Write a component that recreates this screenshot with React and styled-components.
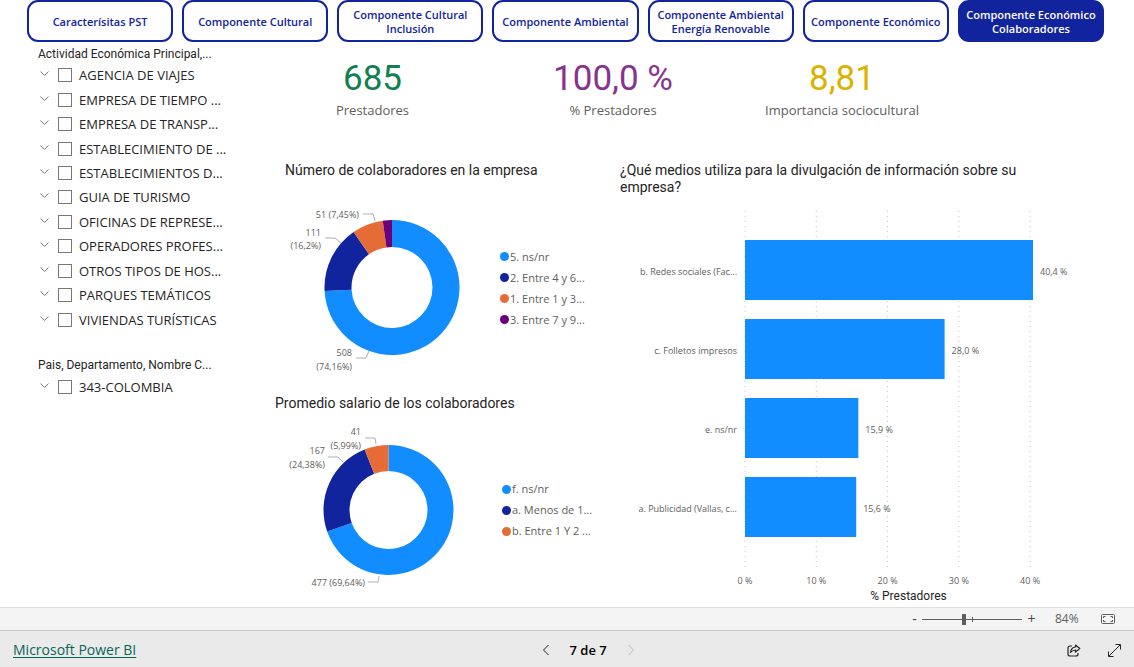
import React from "react";
import styled, { createGlobalStyle, css } from "styled-components";

const COLORS = {
  azure: "#118DFF",
  navy: "#12239E",
  orange: "#E66C37",
  purple: "#6B007B",
  text: "#252423",
  muted: "#605E5C",
};

const UI = '"Open Sans", "Noto Sans", sans-serif';
const DIN = 'Roboto, "Open Sans", sans-serif';

const GlobalStyle = createGlobalStyle`
  *, *::before, *::after { box-sizing: border-box; }
  body { margin: 0; background: #fff; color: ${COLORS.text}; font-family: ${UI}; }
  button, input { font: inherit; }
  ul, h2, p, dl, dd, dt { margin: 0; padding: 0; }
  ul { list-style: none; }
`;

const Page = styled.div`
  display: flex;
  flex-direction: column;
  min-height: 100vh;
`;

const Report = styled.main`
  flex: 1;
  padding: 0 30px 0 27px;
`;

const Tabs = styled.nav`
  display: grid;
  grid-template-columns: repeat(7, 1fr);
  gap: 9px;
`;

const Tab = styled.button`
  height: 42px;
  padding: 2px 2px 0;
  border: 2px solid ${COLORS.navy};
  border-radius: 11px;
  background: ${(p) => (p.$active ? COLORS.navy : "#fff")};
  color: ${(p) => (p.$active ? "#fff" : COLORS.navy)};
  font-size: 11px;
  font-weight: 600;
  line-height: 14px;
  cursor: pointer;
`;

const Body = styled.div`
  display: grid;
  grid-template-columns: 233px 1fr;
`;

const Sidebar = styled.aside`
  padding: 4px 0 0 11px;
`;

const Slicer = styled.section`
  margin-bottom: 25px;
`;

const SlicerTitle = styled.h2`
  font-family: ${DIN};
  font-size: 12px;
  font-weight: 400;
  line-height: 17px;
`;

const SlicerList = styled.ul`
  display: grid;
  grid-auto-rows: 1fr;
  height: ${(p) => p.$height}px;
`;

const SlicerRow = styled.li`
  display: flex;
  align-items: center;
`;

const Expander = styled.button`
  display: flex;
  width: 20px;
  height: 16px;
  padding: 3px 2px;
  border: 0;
  background: none;
`;

const Option = styled.label`
  display: flex;
  align-items: center;
  gap: 7px;
  font-size: 13px;
  line-height: 20px;
  white-space: nowrap;
`;

const Check = styled.input`
  appearance: none;
  width: 14px;
  height: 14px;
  margin: 0;
  border: 1px solid #7a7876;
  background: #fff;
  &:checked { background: ${COLORS.text}; }
`;

const Kpis = styled.dl`
  display: grid;
  grid-template-columns: 225fr 256fr 202fr 161fr;
  padding-top: 16px;
  height: 120px;
`;

const Kpi = styled.div`
  display: flex;
  flex-direction: column-reverse;
  justify-content: flex-end;
  text-align: center;
`;

const KpiValue = styled.dd`
  color: ${(p) => p.$color};
  font-family: ${DIN};
  font-size: 35px;
  line-height: 42px;
`;

const KpiLabel = styled.dt`
  color: ${COLORS.muted};
  font-size: 13px;
  line-height: 20px;
`;

const Charts = styled.div`
  display: grid;
  grid-template-columns: 360px 1fr;
`;

const ChartTitle = styled.h2`
  padding-left: ${(p) => p.$indent || 0}px;
  font-family: ${DIN};
  font-size: 14px;
  font-weight: 400;
  line-height: 17px;
`;

const DonutCard = styled.section`
  height: ${(p) => p.$height}px;
  padding-left: 15px;
`;

const DonutBody = styled.div`
  display: flex;
  align-items: center;
`;

const Drawing = styled.svg`
  display: block;
  flex: none;
  overflow: visible;
`;

const labelText = css`
  fill: ${COLORS.muted};
  font-family: ${UI};
  font-size: 9px;
`;

const DataLabel = styled.text`
  ${labelText}
  text-anchor: ${(p) => p.$anchor || "end"};
`;

const AxisTitle = styled.p`
  padding: 0 32px 0 125px;
  font-family: ${DIN};
  font-size: 12px;
  line-height: 14px;
  text-align: center;
`;

const Leader = styled.polyline`
  fill: none;
  stroke: #b3b0ad;
  stroke-width: 1;
`;

const Legend = styled.ul`
  display: flex;
  flex-direction: column;
  gap: 5px;
`;

const LegendItem = styled.li`
  display: flex;
  align-items: center;
  gap: 1px;
  color: ${COLORS.muted};
  font-size: 11px;
  line-height: 16px;
  white-space: nowrap;
  &::before {
    content: "";
    width: 9px;
    height: 9px;
    border-radius: 50%;
    background: ${(p) => p.$color};
  }
`;

const BarCard = styled.section`
  min-width: 0;
  ${ChartTitle} { padding-right: 64px; }
`;

const Plot = styled.div`
  padding: 14px 71px 0 125px;
`;

const StatusBar = styled.div`
  display: flex;
  align-items: center;
  justify-content: flex-end;
  height: 23px;
  padding-right: 18px;
  border-top: 1px solid #e0e0e0;
  background: #f4f4f4;
  color: ${COLORS.muted};
`;

const ZoomButton = styled.button`
  display: flex;
  align-items: center;
  justify-content: center;
  width: 15px;
  height: 20px;
  padding: 0;
  border: 0;
  background: none;
  color: #484644;
  font-size: 14px;
  line-height: 20px;
`;

const ZoomRange = styled.input`
  appearance: none;
  width: 100px;
  height: 11px;
  margin: 0 2px 0 0;
  background:
    linear-gradient(${COLORS.muted}, ${COLORS.muted}) center / 100% 1px no-repeat,
    linear-gradient(${COLORS.muted}, ${COLORS.muted}) center / 1px 5px no-repeat;
  &::-webkit-slider-thumb {
    appearance: none;
    width: 4px;
    height: 11px;
    background: ${COLORS.muted};
  }
`;

const ZoomValue = styled.output`
  width: 62px;
  padding-left: 16px;
  font-size: 12px;
  line-height: 20px;
`;

const Footer = styled.footer`
  display: flex;
  align-items: center;
  justify-content: space-between;
  height: 37px;
  padding: 2px 0 0 13px;
  border-top: 1px solid #c8c8c8;
  background: #eaeaea;
`;

const BrandLink = styled.a`
  color: #0b6556;
  font-size: 14px;
  line-height: 20px;
  text-underline-offset: 2px;
`;

const Pager = styled.div`
  display: flex;
  align-items: center;
  gap: 12px;
  margin-right: 14px;
  color: #000;
  font-size: 13px;
  font-weight: 600;
  line-height: 20px;
`;

const IconButton = styled.button`
  display: flex;
  align-items: center;
  justify-content: center;
  width: ${(p) => p.$width}px;
  height: 24px;
  padding: 0;
  border: 0;
  background: none;
  color: ${(p) => p.$color || "#252423"};
`;

const Actions = styled.div`
  display: flex;
`;

const tabs = [
  "Caracterísitas PST",
  "Componente Cultural",
  "Componente Cultural Inclusión",
  "Componente Ambiental",
  "Componente Ambiental Energía Renovable",
  "Componente Económico",
  "Componente Económico Colaboradores",
];

const activities = [
  "AGENCIA DE VIAJES",
  "EMPRESA DE TIEMPO ...",
  "EMPRESA DE TRANSP...",
  "ESTABLECIMIENTO DE ...",
  "ESTABLECIMIENTOS D...",
  "GUIA DE TURISMO",
  "OFICINAS DE REPRESE...",
  "OPERADORES PROFES...",
  "OTROS TIPOS DE HOS...",
  "PARQUES TEMÁTICOS",
  "VIVIENDAS TURÍSTICAS",
];

const kpis = [
  { value: "685", label: "Prestadores", color: "#118050" },
  { value: "100,0 %", label: "% Prestadores", color: "#87338F" },
  { value: "8,81", label: "Importancia sociocultural", color: "#D9B300" },
];

const employees = {
  cx: 117,
  cy: 108.5,
  outer: 67.5,
  inner: 40.5,
  slices: [
    { value: 508, color: COLORS.azure, label: "5. ns/nr" },
    { value: 111, color: COLORS.navy, label: "2. Entre 4 y 6..." },
    { value: 51, color: COLORS.orange, label: "1. Entre 1 y 3..." },
    { value: 15, color: COLORS.purple, label: "3. Entre 7 y 9..." },
  ],
  labels: [
    { x: 84, y: 39, text: "51 (7,45%)" },
    { x: 46, y: 57, text: "111" },
    { x: 46, y: 70, text: "(16,2%)" },
    { x: 77, y: 177, text: "508" },
    { x: 77, y: 191, text: "(74,16%)" },
  ],
  leaders: ["88,35 98,35 100,42", "50,59 60,59 66,64", "81,179 91,179 94,172"],
};

const salary = {
  cx: 113.5,
  cy: 98,
  outer: 65,
  inner: 39,
  slices: [
    { value: 477, color: COLORS.azure, label: "f. ns/nr" },
    { value: 167, color: COLORS.navy, label: "a. Menos de 1..." },
    { value: 41, color: COLORS.orange, label: "b. Entre 1 Y 2 ..." },
  ],
  labels: [
    { x: 86, y: 23, text: "41" },
    { x: 86, y: 37, text: "(5,99%)" },
    { x: 50, y: 42, text: "167" },
    { x: 50, y: 56, text: "(24,38%)" },
    { x: 90, y: 174, text: "477 (69,64%)" },
  ],
  leaders: ["90,26 100,26 101,32", "53,45 63,45 68,50", "93,170 103,170 104,164"],
};

const media = [
  { label: "b. Redes sociales (Fac...", value: 40.4, text: "40,4 %" },
  { label: "c. Folletos impresos", value: 28.0, text: "28,0 %" },
  { label: "e. ns/nr", value: 15.9, text: "15,9 %" },
  { label: "a. Publicidad (Vallas, c...", value: 15.6, text: "15,6 %" },
];

function slicePath(cx, cy, outer, inner, from, to) {
  const point = (r, t) => {
    const a = t * 2 * Math.PI;
    return `${cx + r * Math.sin(a)} ${cy - r * Math.cos(a)}`;
  };
  const large = to - from > 0.5 ? 1 : 0;
  return `M${point(outer, from)}A${outer} ${outer} 0 ${large} 1 ${point(outer, to)}L${point(inner, to)}A${inner} ${inner} 0 ${large} 0 ${point(inner, from)}Z`;
}

function Donut({ data, width, height, title }) {
  const total = data.slices.reduce((sum, s) => sum + s.value, 0);
  let start = 0;
  return (
    <DonutBody>
      <Drawing width={width} height={height} role="img" aria-label={title}>
        {data.slices.map((s) => {
          const end = start + s.value / total;
          const d = slicePath(data.cx, data.cy, data.outer, data.inner, start, end);
          start = end;
          return <path key={s.label} d={d} fill={s.color} />;
        })}
        {data.leaders.map((points) => (
          <Leader key={points} points={points} />
        ))}
        {data.labels.map((l) => (
          <DataLabel key={l.text} x={l.x} y={l.y}>{l.text}</DataLabel>
        ))}
      </Drawing>
      <Legend>
        {data.slices.map((s) => (
          <LegendItem key={s.label} $color={s.color}>{s.label}</LegendItem>
        ))}
      </Legend>
    </DonutBody>
  );
}

function BarChart() {
  const percent = (v) => `${(v / 40.4) * 100}%`;
  return (
    <Plot>
      <Drawing width="100%" height="379" role="img" aria-label="% Prestadores por medio">
        {[0, 10, 20, 30, 40].map((t) => (
          <g key={t}>
            <line x1={percent(t)} x2={percent(t)} y1="1" y2="361" stroke="#c8c6c4" strokeDasharray="1 4" />
            <DataLabel $anchor="middle" x={percent(t)} y="374">{t} %</DataLabel>
          </g>
        ))}
        {media.map((m, i) => (
          <g key={m.label}>
            <rect y={30 + i * 79} width={percent(m.value)} height="60" fill={COLORS.azure} />
            <DataLabel x="0" dx="-8" y={65 + i * 79}>{m.label}</DataLabel>
            <DataLabel $anchor="start" x={percent(m.value)} dx="7" y={65 + i * 79}>{m.text}</DataLabel>
          </g>
        ))}
      </Drawing>
    </Plot>
  );
}

function SlicerOption({ name }) {
  return (
    <SlicerRow>
      <Expander aria-label={`Expandir ${name}`}>
        <svg width="10" height="8" viewBox="0 0 10 8" fill="none" stroke="#7a7876">
          <path d="M0.5 1.5 4.5 5.5 8.5 1.5" />
        </svg>
      </Expander>
      <Option>
        <Check type="checkbox" />
        {name}
      </Option>
    </SlicerRow>
  );
}

export default function App() {
  return (
    <Page>
      <GlobalStyle />
      <Report>
        <Tabs>
          {tabs.map((t, i) => (
            <Tab key={t} $active={i === 6}>{t}</Tab>
          ))}
        </Tabs>
        <Body>
          <Sidebar>
            <Slicer>
              <SlicerTitle>Actividad Económica Principal,...</SlicerTitle>
              <SlicerList $height={269}>
                {activities.map((a) => <SlicerOption key={a} name={a} />)}
              </SlicerList>
            </Slicer>
            <Slicer>
              <SlicerTitle>Pais, Departamento, Nombre C...</SlicerTitle>
              <SlicerList $height={25}>
                <SlicerOption name="343-COLOMBIA" />
              </SlicerList>
            </Slicer>
          </Sidebar>
          <div>
            <Kpis>
              {kpis.map((k) => (
                <Kpi key={k.label}>
                  <KpiLabel>{k.label}</KpiLabel>
                  <KpiValue $color={k.color}>{k.value}</KpiValue>
                </Kpi>
              ))}
            </Kpis>
            <Charts>
              <div>
                <DonutCard $height={233}>
                  <ChartTitle $indent={10}>Número de colaboradores en la empresa</ChartTitle>
                  <Donut data={employees} width={225} height={218} title="Número de colaboradores en la empresa" />
                </DonutCard>
                <DonutCard $height={210}>
                  <ChartTitle>Promedio salario de los colaboradores</ChartTitle>
                  <Donut data={salary} width={227} height={196} title="Promedio salario de los colaboradores" />
                </DonutCard>
              </div>
              <BarCard>
                <ChartTitle>¿Qué medios utiliza para la divulgación de información sobre su empresa?</ChartTitle>
                <BarChart />
                <AxisTitle>% Prestadores</AxisTitle>
              </BarCard>
            </Charts>
          </div>
        </Body>
      </Report>
      <StatusBar>
        <ZoomButton aria-label="Alejar">-</ZoomButton>
        <ZoomRange type="range" min="0" max="100" defaultValue="42" aria-label="Zoom" />
        <ZoomButton aria-label="Acercar">+</ZoomButton>
        <ZoomValue>84%</ZoomValue>
        <ZoomButton aria-label="Ajustar a la página">
          <svg width="15" height="11" viewBox="0 0 15 11" fill="none" stroke={COLORS.muted}>
            <rect x="0.5" y="0.5" width="13" height="9" rx="1" />
            <path d="M2.5 4V2.5H4.5M9.5 2.5H11.5V4M11.5 6V7.5H9.5M4.5 7.5H2.5V6" />
          </svg>
        </ZoomButton>
      </StatusBar>
      <Footer>
        <BrandLink href="#powerbi">Microsoft Power BI</BrandLink>
        <Pager>
          <IconButton $width={24} aria-label="Página anterior">
            <svg width="8" height="12" viewBox="0 0 8 12" fill="none" stroke="currentColor">
              <path d="M6.5 1 1.5 6 6.5 11" />
            </svg>
          </IconButton>
          <span>7 de 7</span>
          <IconButton $width={24} $color="#b8b8b8" disabled aria-label="Página siguiente">
            <svg width="8" height="12" viewBox="0 0 8 12" fill="none" stroke="currentColor">
              <path d="M1.5 1 6.5 6 1.5 11" />
            </svg>
          </IconButton>
        </Pager>
        <Actions>
          <IconButton $width={40} aria-label="Compartir">
            <svg width="14" height="13" viewBox="0 0 14 13" fill="none" stroke="currentColor" strokeWidth="1.2" strokeLinejoin="round">
              <path d="M5 2H3A2 2 0 0 0 1 4V10A2 2 0 0 0 3 12H9A2 2 0 0 0 11 10V9" />
              <path d="M8.5 1 12.8 4.5 8.5 8V6C6.5 6 5 6.5 3.5 8.5 3.8 5.5 5.5 3.3 8.5 3Z" />
            </svg>
          </IconButton>
          <IconButton $width={40} aria-label="Pantalla completa">
            <svg width="13" height="13" viewBox="0 0 13 13" fill="none" stroke="currentColor">
              <path d="M1 12 12 1M7.5 0.5H12.5V5.5M0.5 7.5V12.5H5.5" />
            </svg>
          </IconButton>
        </Actions>
      </Footer>
    </Page>
  );
}
